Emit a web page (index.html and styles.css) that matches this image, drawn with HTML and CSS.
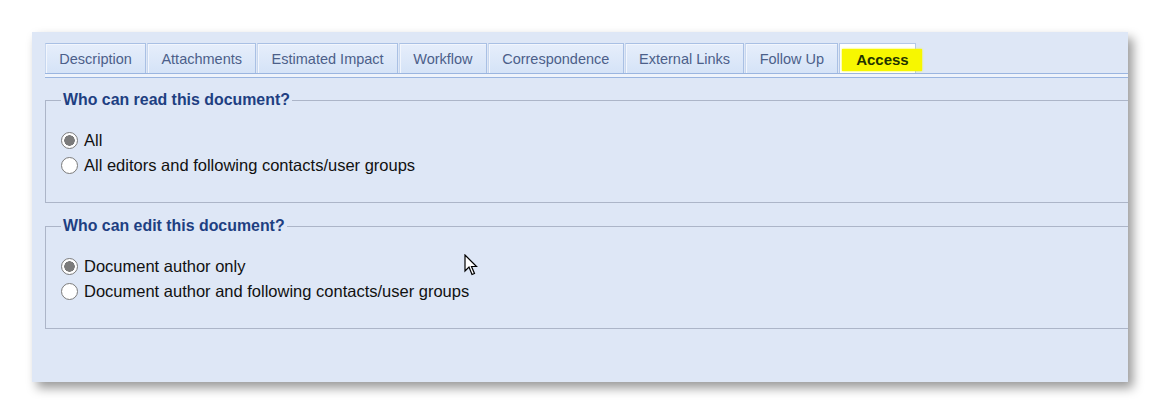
FILE: index.html
```html
<html lang="en">
<head>
    <meta charset="UTF-8">
    <title>Document Access</title>
    <link rel="stylesheet" href="styles.css">
</head>
<body>
    <div class="panel">
        <div class="tabs">
            <div class="tab">Description</div>
            <div class="tab">Attachments</div>
            <div class="tab">Estimated Impact</div>
            <div class="tab">Workflow</div>
            <div class="tab">Correspondence</div>
            <div class="tab">External Links</div>
            <div class="tab">Follow Up</div>
            <div class="tab active"><span class="mark">Access</span></div>
        </div>
        <div class="strip"></div>

        <fieldset class="group first">
            <legend>Who can read this document?</legend>
            <label class="option"><input type="radio" name="read" checked> All</label>
            <label class="option"><input type="radio" name="read"> All editors and following contacts/user groups</label>
        </fieldset>

        <fieldset class="group">
            <legend>Who can edit this document?</legend>
            <label class="option"><input type="radio" name="edit" checked> Document author only</label>
            <label class="option"><input type="radio" name="edit"> Document author and following contacts/user groups</label>
        </fieldset>

        <svg class="cursor" width="16" height="24" viewBox="0 0 16 24">
            <path d="M1 1 L1 17 L5 13 L8 20.5 L10.5 19.5 L7.5 12.5 L12.5 12.5 Z" fill="#fff" stroke="#000" stroke-width="1.2" stroke-linejoin="miter"/>
        </svg>
    </div>
</body>
</html>
```

FILE: styles.css
```css
body {
    margin: 0;
    padding: 32px;
    background-color: #ffffff;
    font-family: "Liberation Sans", Arial, sans-serif;
}

.panel {
    position: relative;
    width: 1083px;
    height: 339px;
    padding: 11px 0 0 13px;
    background-color: #dee7f6;
    box-shadow: 5px 6px 10px rgba(0, 0, 0, 0.4);
    overflow: hidden;
}

.tabs {
    display: flex;
    height: 30px;
}

.tab {
    display: flex;
    align-items: center;
    padding: 0 13.3px;
    font-size: 14.5px;
    color: #4c5f8a;
    background: linear-gradient(#e6eefb, #d5e3f7);
    border: 1px solid #a9c0e4;
    border-bottom: none;
    border-left-color: #c7d7ef;
    box-shadow: inset 1px 1px 0 #f2f6fd;
    margin-right: 1px;
}

.tab.active {
    width: 73px;
    background: #ffffff;
    box-shadow: none;
    border-color: #b4c8e8;
    padding: 0 0 0 2px;
}

.mark {
    flex: none;
    width: 80px;
    text-align: center;
    background-color: #f7f700;
    color: #1f3300;
    font-weight: bold;
    font-size: 15px;
    padding: 2px 0 3px 0;
    margin-top: 2px;
    box-shadow: 0 0 2px #f7f700;
}

.strip {
    height: 3px;
    border-top: 1px solid #9ab5e0;
    border-bottom: 1px solid #9ab5e0;
    background-color: #eef3fb;
}

.group {
    margin: 14px 0 0 0;
    width: 1200px;
    padding: 19px 0 24px 15px;
    border: 1px solid #acb5c8;
    border-right: none;
}

.group legend {
    font-weight: bold;
    font-size: 15.9px;
    color: #1e3f82;
    padding: 0 2px;
}

.group.first {
    margin-top: 13px;
}

.option {
    display: flex;
    align-items: center;
    height: 25px;
    font-size: 16.5px;
    color: #111111;
}

.option input {
    appearance: none;
    width: 17px;
    height: 17px;
    margin: 0 6px 0 0;
    border: 1px solid #7b7b7b;
    border-radius: 50%;
    background-color: #ffffff;
}

.option input:checked {
    background: radial-gradient(circle, #7b7b7b 0 5px, #ffffff 5.5px);
}

.cursor {
    position: absolute;
    left: 432px;
    top: 222px;
}
```
